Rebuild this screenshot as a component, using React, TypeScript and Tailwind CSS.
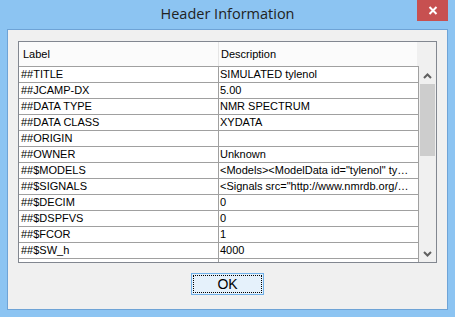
import React from 'react';

const rows: [string, string][] = [
  ['##TITLE', 'SIMULATED tylenol'],
  ['##JCAMP-DX', '5.00'],
  ['##DATA TYPE', 'NMR SPECTRUM'],
  ['##DATA CLASS', 'XYDATA'],
  ['##ORIGIN', ''],
  ['##OWNER', 'Unknown'],
  ['##$MODELS', '<Models><ModelData id="tylenol" ty…'],
  ['##$SIGNALS', '<Signals src="http://www.nmrdb.org/…'],
  ['##$DECIM', '0'],
  ['##$DSPFVS', '0'],
  ['##$FCOR', '1'],
  ['##$SW_h', '4000'],
  ['', ''],
];

function Chevron({ up }: { up?: boolean }) {
  return (
    <svg width="9" height="6" viewBox="0 0 9 6" className="block">
      <path
        d={up ? 'M1 5 L4.5 1.5 L8 5' : 'M1 1 L4.5 4.5 L8 1'}
        fill="none"
        stroke="#606060"
        strokeWidth="2"
      />
    </svg>
  );
}

export default function App() {
  return (
    <div className="w-[455px] h-[317px] bg-[#8cc4f2] flex flex-col px-[7px] pb-[7px] font-['Liberation_Sans',Arial,sans-serif] text-[11px] text-black">
      {/* title bar */}
      <div className="relative h-[29px] flex items-center justify-center">
        <span className="font-['Open_Sans',sans-serif] text-[14.5px] text-[#222] leading-none">Header Information</span>
        <div className="absolute top-0 right-0 w-[31px] h-[21px] bg-[#c75050] flex items-center justify-center">
          <svg width="10" height="9" viewBox="0 0 10 9">
            <path d="M1.5 1 L8.5 8 M8.5 1 L1.5 8" stroke="#fff" strokeWidth="2" />
          </svg>
        </div>
      </div>

      {/* client area */}
      <div className="flex-1 border border-[#6ea3d6] bg-[#f0f0f0] flex flex-col items-center pt-[11px]">
        <div className="w-[419px] h-[222px] border border-[#828790] flex flex-col bg-[#f0f0f0]">
          {/* header */}
          <div className="h-[24px] flex shrink-0">
            <div className="w-[200px] bg-[#fbfbfb] border-r border-[#e5e5e5] flex items-center pl-[4px]">Label</div>
            <div className="w-[198px] bg-[#fbfbfb] flex items-center pl-[2px]">Description</div>
            <div className="flex-1" />
          </div>
          {/* body */}
          <div className="flex-1 flex min-h-0">
            <div className="w-[400px] overflow-hidden bg-white border-t border-[#a0a0a0]">
              {rows.map(([k, v], i) => (
                <div key={i} className="h-[16px] flex border-b border-[#a0a0a0]">
                  <div className="w-[200px] border-r border-[#a0a0a0] pl-[2px] flex items-center whitespace-nowrap overflow-hidden">{k}</div>
                  <div className="w-[200px] border-r border-[#a0a0a0] pl-[1px] flex items-center whitespace-nowrap overflow-hidden">{v}</div>
                </div>
              ))}
            </div>
            <div className="w-[17px] flex flex-col bg-[#f0f0f0] pt-px">
              <div className="h-[17px] flex items-center justify-center"><Chevron up /></div>
              <div className="h-[72px] mx-px bg-[#cdcdcd]" />
              <div className="flex-1" />
              <div className="h-[17px] flex items-center justify-center"><Chevron /></div>
            </div>
          </div>
        </div>

        <div className="mt-[10px] w-[73px] h-[22px] border border-[#70b0e8] bg-[#e5f1fb] p-px">
          <div className="w-full h-full border border-dotted border-black flex items-center justify-center text-[14px] font-['Liberation_Sans',sans-serif]">
            OK
          </div>
        </div>
      </div>
    </div>
  );
}
